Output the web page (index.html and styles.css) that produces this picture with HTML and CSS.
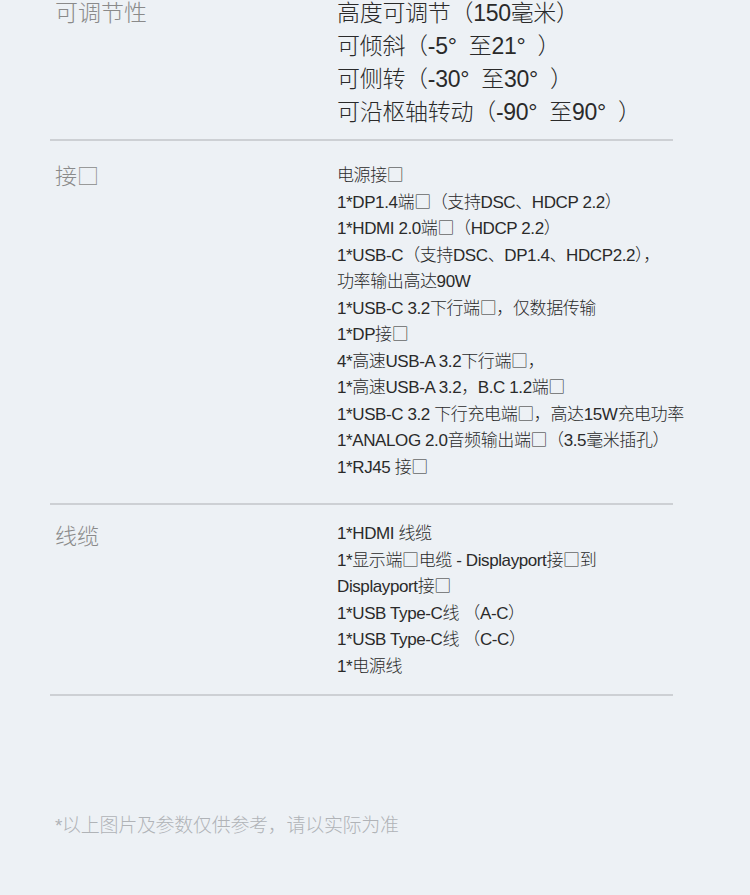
FILE: index.html
```html
<!DOCTYPE html>
<html lang="zh-CN">
<head>
  <meta charset="UTF-8">
  <meta name="viewport" content="width=device-width, initial-scale=1.0">
  <title>规格参数</title>
  <link rel="stylesheet" href="styles.css">
</head>
<body>
  <div class="specs">
    <!-- 可调节性 -->
    <div class="spec-row spec-row--large">
      <div class="spec-label">可调节性</div>
      <ul class="spec-values">
        <li>高度可调节（150毫米）</li>
        <li>可倾斜（-5°&nbsp;&nbsp;至21°&nbsp;&nbsp;）</li>
        <li>可侧转（-30°&nbsp;&nbsp;至30°&nbsp;&nbsp;）</li>
        <li>可沿枢轴转动（-90°&nbsp;&nbsp;至90°&nbsp;&nbsp;）</li>
      </ul>
    </div>

    <!-- 接口 -->
    <div class="spec-row spec-row--ports">
      <div class="spec-label">接<span class="sq">□</span></div>
      <ul class="spec-values">
        <li>电源接<span class="sq">□</span></li>
        <li>1*DP1.4端<span class="sq">□</span>（支持DSC、HDCP 2.2）</li>
        <li>1*HDMI 2.0端<span class="sq">□</span>（HDCP 2.2）</li>
        <li>1*USB-C（支持DSC、DP1.4、HDCP2.2），</li>
        <li>功率输出高达90W</li>
        <li>1*USB-C 3.2下行端<span class="sq">□</span>，仅数据传输</li>
        <li>1*DP接<span class="sq">□</span></li>
        <li>4*高速USB-A 3.2下行端<span class="sq">□</span>，</li>
        <li>1*高速USB-A 3.2，B.C 1.2端<span class="sq">□</span></li>
        <li>1*USB-C 3.2 下行充电端<span class="sq">□</span>，高达15W充电功率</li>
        <li>1*ANALOG 2.0音频输出端<span class="sq">□</span>（3.5毫米插孔）</li>
        <li>1*RJ45 接<span class="sq">□</span></li>
      </ul>
    </div>

    <!-- 线缆 -->
    <div class="spec-row spec-row--cables">
      <div class="spec-label">线缆</div>
      <ul class="spec-values">
        <li>1*HDMI 线缆</li>
        <li>1*显示端<span class="sq">□</span>电缆 - Displayport接<span class="sq">□</span>到</li>
        <li>Displayport接<span class="sq">□</span></li>
        <li>1*USB Type-C线 （A-C）</li>
        <li>1*USB Type-C线 （C-C）</li>
        <li>1*电源线</li>
      </ul>
    </div>
  </div>

  <p class="note">*以上图片及参数仅供参考，请以实际为准</p>
</body>
</html>
```

FILE: styles.css
```css
:root {
  --bg: #edf1f5;
  --text: #2a2a2a;
  --label: #8a8a8a;
  --rule: #cdd0d4;
  --note: #b0b3b7;
}
html, body {
  background: var(--bg);
}
body {
  margin: 0;
  font-family: "Liberation Sans", "Noto Sans CJK SC", sans-serif;
  color: var(--text);
  overflow: hidden;
}
.specs {
  width: 623px;
  margin: -3px 0 0 50px;
}
.spec-row {
  display: grid;
  grid-template-columns: 287px 1fr;
  border-bottom: 2px solid var(--rule);
}
.spec-label {
  padding-left: 5px;
  color: var(--label);
  font-size: 22px;
  font-weight: 300;
}
.spec-values {
  list-style: none;
  margin: 0;
  padding: 0;
  font-size: 17px;
  font-weight: 300;
  line-height: 26.5px;
  letter-spacing: -0.4px;
  white-space: nowrap;
}
.sq {
  font-family: "Noto Sans CJK SC", sans-serif;
  font-weight: 300;
  line-height: 1;
}
.spec-row--large .spec-label {
  font-size: 23px;
  line-height: 33px;
}
.spec-row--large .spec-values {
  font-size: 23px;
  line-height: 33px;
  letter-spacing: -0.3px;
  padding-bottom: 10px;
}
.spec-row--ports {
  padding: 22px 0 22px;
}
.spec-row--ports .spec-label {
  line-height: 20px;
}
.spec-row--cables {
  padding: 16px 0 14px;
}
.spec-row--cables .spec-label {
  line-height: 32px;
}
.note {
  margin: 114px 0 0 55px;
  font-size: 19px;
  font-weight: 300;
  letter-spacing: -0.3px;
  color: var(--note);
}
```
